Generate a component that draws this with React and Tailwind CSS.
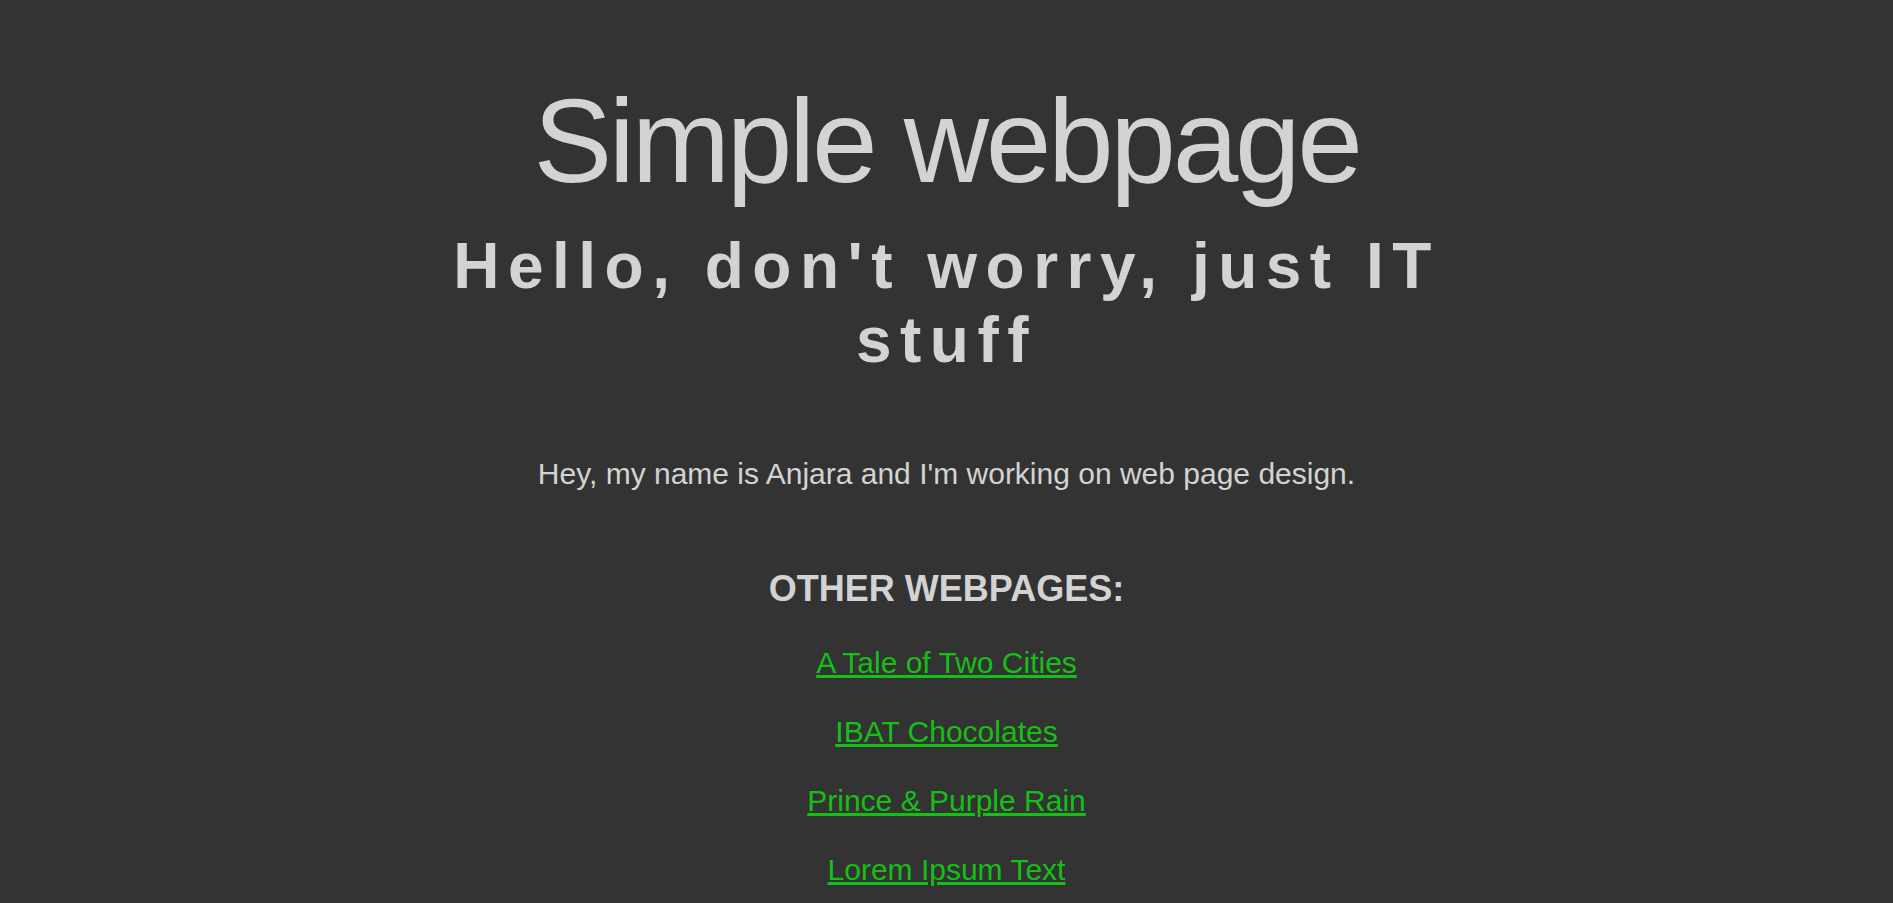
import React from 'react';

const links = [
  'A Tale of Two Cities',
  'IBAT Chocolates',
  'Prince & Purple Rain',
  'Lorem Ipsum Text',
];

const App = () => {
  return (
    <div className="min-h-screen bg-[#333333] text-[#d3d3d3] font-['Liberation_Sans',Arial,sans-serif] text-center">
      <header className="pt-[82px] flex flex-col items-center">
        <h1 className="text-[118px] leading-none font-normal tracking-[-3.3px]">Simple webpage</h1>
        <h2 className="mt-[30px] max-w-[1120px] text-[64px] leading-[1.15] font-bold tracking-[8.5px]">
          Hello, don't worry, just IT stuff
        </h2>
      </header>

      <p className="mt-[80px] text-[30px] leading-[33px]">
        Hey, my name is Anjara and I'm working on web page design.
      </p>

      {/* Other pages */}
      <section className="mt-[79px] flex flex-col items-center">
        <h3 className="text-[36px] leading-[39px] font-bold">OTHER WEBPAGES:</h3>
        <ul className="mt-[38px] flex flex-col items-center gap-[36px]">
          {links.map((label) => (
            <li key={label} className="text-[30px] leading-[33px]">
              <a href="#" className="text-[#16bf16] underline">
                {label}
              </a>
            </li>
          ))}
        </ul>
      </section>
    </div>
  );
};

export default App;
